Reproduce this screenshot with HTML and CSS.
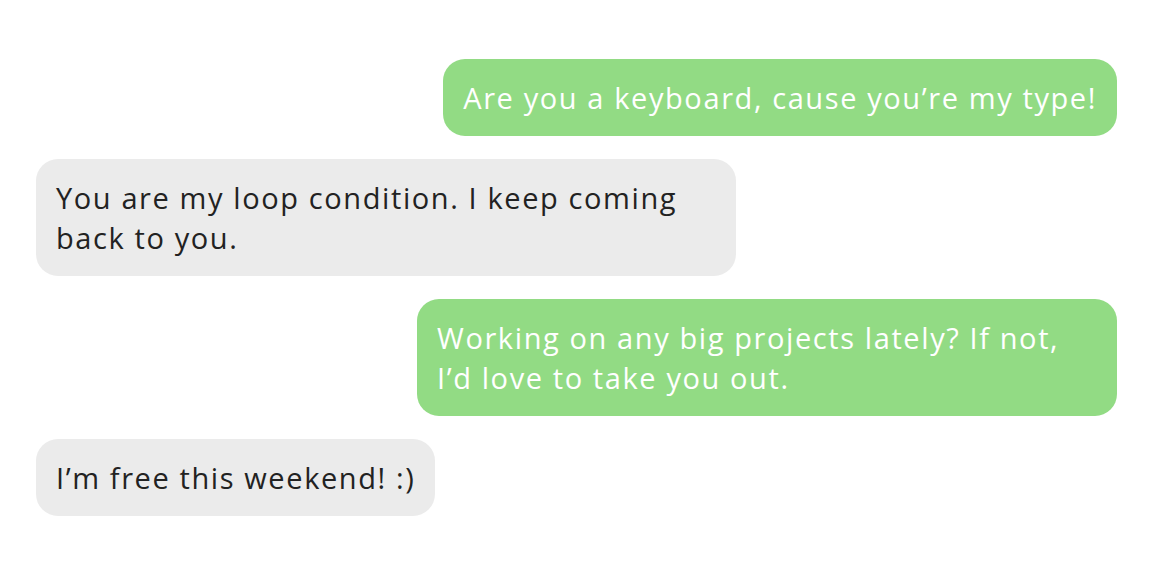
FILE: index.html
```html
<!DOCTYPE html>
<html>
<head>
<meta charset="utf-8">
<link rel="stylesheet" href="styles.css">
</head>
<body>
<div class="chat">
  <div class="bubble sent">Are you a keyboard, cause you’re my type!</div>
  <div class="bubble received">You are my loop condition. I keep coming back to you.</div>
  <div class="bubble sent">Working on any big projects lately? If not, I’d love to take you out.</div>
  <div class="bubble received">I’m free this weekend! :)</div>
</div>
</body>
</html>
```
FILE: styles.css
```css
html, body {
  margin: 0;
  background: #ffffff;
}
.chat {
  display: flex;
  flex-direction: column;
  gap: 23px;
  padding: 59px 55px 0 36px;
  font-family: "Open Sans", "Noto Sans", sans-serif;
  font-size: 29px;
  line-height: 40px;
  letter-spacing: 1.6px;
}
.bubble {
  max-width: 660px;
  padding: 18.5px 20px;
  border-radius: 22px;
}
.sent {
  align-self: flex-end;
  background: #92db84;
  color: #ffffff;
}
.received {
  align-self: flex-start;
  background: #ebebeb;
  color: #222222;
}
```
